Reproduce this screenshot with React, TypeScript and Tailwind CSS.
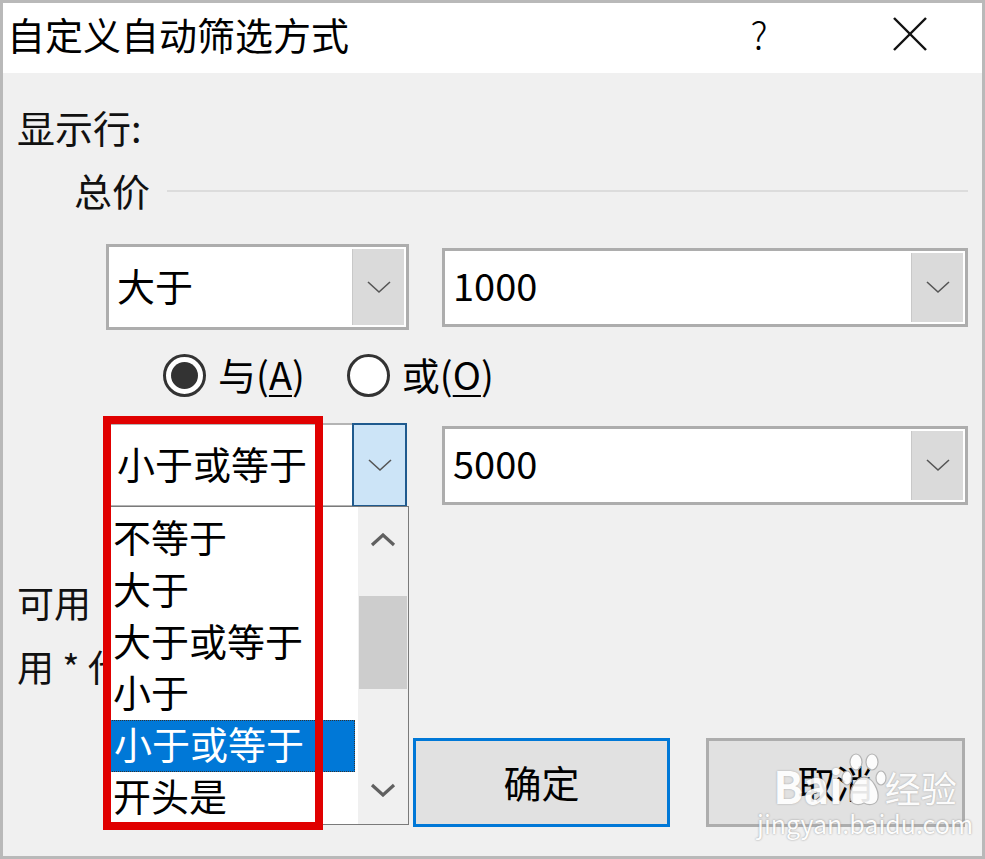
import React from 'react';

const font = { fontFamily: '"Noto Sans CJK SC", "Noto Sans", sans-serif' };

const Chevron = ({ up = false, bold = false }: { up?: boolean; bold?: boolean }) => (
  <svg width="26" height="14" viewBox="0 0 26 14" fill="none">
    <polyline
      points={up ? '2,12 13,2 24,12' : '2,2 13,12 24,2'}
      stroke={bold ? '#606060' : '#555'}
      strokeWidth={bold ? 3.2 : 1.6}
      strokeLinejoin="miter"
    />
  </svg>
);

const Combo = ({ value, className = '' }: { value: string; className?: string }) => (
  <div className={`flex border-[3px] border-[#adadad] bg-white ${className}`}>
    <div className="flex flex-1 items-center pb-[4px] pl-[8px] text-[38px] leading-none text-black">{value}</div>
    <div className="my-[2px] mr-[2px] flex w-[52px] items-center justify-center border-l border-[#c8c8c8] bg-[#dadada]">
      <Chevron />
    </div>
  </div>
);

const Radio = ({ checked, label, hot }: { checked: boolean; label: string; hot: string }) => (
  <div className="flex items-center gap-[12px]">
    <div className="flex h-[43px] w-[43px] items-center justify-center rounded-full border-[3px] border-[#333] bg-white">
      {checked && <div className="h-[27px] w-[27px] rounded-full bg-[#333]" />}
    </div>
    <span className="pb-[4px] text-[38px] leading-none text-black">
      {label}(<span className="underline underline-offset-[5px] decoration-2">{hot}</span>)
    </span>
  </div>
);

const items = ['不等于', '大于', '大于或等于', '小于', '小于或等于', '开头是'];

// baidu paw print for the watermark
const Paw = () => (
  <svg width="46" height="56" viewBox="0 0 46 56">
    <g fill="white" stroke="#b0b0b0" strokeWidth="1.2">
      <ellipse cx="15" cy="9" rx="6" ry="8" />
      <ellipse cx="31" cy="9" rx="6" ry="8" />
      <ellipse cx="6" cy="25" rx="5" ry="7" />
      <ellipse cx="40" cy="25" rx="5" ry="7" />
      <path d="M23 24 C14 24 8 38 9 45 C10 52 18 53 23 50 C28 53 36 52 37 45 C38 38 32 24 23 24 Z" />
    </g>
  </svg>
);

export default function App() {
  return (
    <div className="relative flex h-[859px] w-[985px] flex-col border-[3px] border-[#b9b9b9] bg-[#f0f0f0]" style={font}>
      {/* title bar */}
      <div className="flex h-[70px] items-center bg-white pb-[8px] pl-[4px]">
        <div className="flex-1 text-[38px] leading-none text-black">自定义自动筛选方式</div>
        <div className="w-[40px] text-center text-[38px] font-light leading-none text-black">?</div>
        <div className="ml-[111px] mr-[52px] flex w-[40px] justify-center">
          <svg width="36" height="36" viewBox="0 0 36 36">
            <line x1="2" y1="2" x2="34" y2="34" stroke="#111" strokeWidth="2.4" />
            <line x1="34" y1="2" x2="2" y2="34" stroke="#111" strokeWidth="2.4" />
          </svg>
        </div>
      </div>

      {/* body */}
      <div className="flex flex-1 flex-col pt-[35px]">
        <div className="pl-[14px] text-[38px] leading-none text-[#111]">显示行:</div>

        <div className="ml-[71px] mr-[14px] mt-[25px] flex items-center">
          <span className="text-[38px] leading-none text-[#111]">总价</span>
          <div className="ml-[17px] mt-[2px] h-[2px] flex-1 bg-[#dcdcdc]" />
        </div>

        <div className="ml-[103px] mt-[35px] flex items-center gap-[33px]">
          <Combo value="大于" className="h-[86px] w-[303px]" />
          <Combo value="1000" className="h-[79px] w-[526px]" />
        </div>

        <div className="ml-[160px] mt-[24px] flex items-center gap-[42px]">
          <Radio checked label="与" hot="A" />
          <Radio checked={false} label="或" hot="O" />
        </div>

        <div className="ml-[103px] mt-[26px] flex items-center gap-[35px]">
          <div className="flex h-[84px] w-[301px]">
            <div className="flex flex-1 items-center border-y-2 border-l-2 border-[#b4b4b4] bg-white pb-[4px] pl-[9px] text-[38px] leading-none text-black">
              小于或等于
            </div>
            <div className="flex w-[55px] items-center justify-center border-2 border-[#1f5a8e] bg-[#cce4f7]">
              <Chevron />
            </div>
          </div>
          <Combo value="5000" className="h-[79px] w-[526px]" />
        </div>

        <div className="mt-[77px] pl-[14px] text-[37px] leading-none text-[#111]">可用&nbsp;&nbsp;? 代表单个字符</div>
        <div className="mt-[27px] pl-[14px] text-[37px] leading-none text-[#111]">用 * 代表任意多个字符</div>

        <div className="mr-[17px] mt-[53px] flex justify-end gap-[36px]">
          <div className="flex h-[89px] w-[257px] items-center justify-center border-[3px] border-[#0078d7] bg-[#e1e1e1] pb-[2px] text-[38px] leading-none text-black">
            确定
          </div>
          <div className="flex h-[89px] w-[259px] items-center justify-center border-[3px] border-[#adadad] bg-[#e1e1e1] pb-[2px] text-[38px] leading-none text-black">
            取消
          </div>
        </div>
      </div>

      {/* open dropdown list */}
      <div className="absolute left-[104px] top-[503px] flex h-[319px] w-[302px] border border-[#7a7a7a] bg-white">
        <div className="flex flex-1 flex-col pt-[6px]">
          {items.map((it, i) => (
            <div
              key={it + i}
              className={`flex h-[52px] items-center pb-[6px] pl-[5px] text-[38px] leading-none ${
                i === 4 ? 'border border-dotted border-[#333] bg-[#0078d7] text-white' : 'text-black'
              }`}
            >
              {it}
            </div>
          ))}
        </div>
        <div className="ml-[3px] flex w-[50px] flex-col items-center bg-[#f0f0f0]">
          <div className="flex h-[62px] items-center justify-center pt-[4px]">
            <Chevron up bold />
          </div>
          <div className="mt-[27px] h-[93px] w-[48px] bg-[#cdcdcd]" />
          <div className="flex-1" />
          <div className="flex h-[60px] items-center justify-center pb-[8px]">
            <Chevron bold />
          </div>
        </div>
      </div>

      {/* red highlight frame */}
      <div className="pointer-events-none absolute left-[100px] top-[413px] h-[414px] w-[220px] border-[8px] border-[#e00000]" />

      {/* watermark */}
      <div className="pointer-events-none absolute left-[754px] top-[750px] flex flex-col items-center opacity-90">
        <div className="flex items-end leading-none text-white [text-shadow:0_0_2px_#999]">
          <span className="pb-[2px] text-[44px] font-bold">Bai</span>
          <span className="-mx-[2px]">
            <Paw />
          </span>
          <span className="pb-[4px] text-[36px]">经验</span>
        </div>
        <div className="mt-[2px] text-[25px] leading-none text-white [text-shadow:0_0_2px_#888]">jingyan.baidu.com</div>
      </div>
    </div>
  );
}
